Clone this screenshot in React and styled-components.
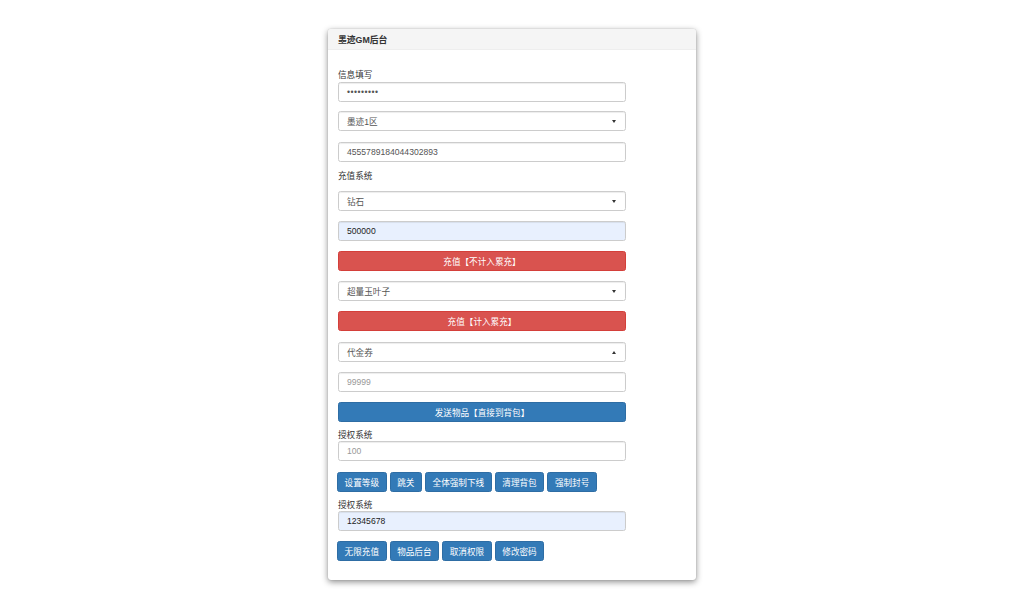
import styled, { createGlobalStyle } from 'styled-components'

const GlobalStyle = createGlobalStyle`
  html, body {
    margin: 0;
    padding: 0;
    background: #fff;
  }
  body {
    font-family: "Liberation Sans", "Noto Sans CJK SC", sans-serif;
    font-size: 8.6px;
    color: #333;
  }
  * { box-sizing: border-box; }
`

const Page = styled.div`
  display: flex;
  justify-content: center;
  padding-top: 29px;
  min-height: 601px;
`

const Panel = styled.div`
  width: 368px;
  background: #fff;
  border-radius: 3px;
  box-shadow: 0 2px 6px rgba(0, 0, 0, 0.45), 0 0 1px rgba(0, 0, 0, 0.3);
  align-self: flex-start;
`

const PanelHead = styled.div`
  height: 21px;
  display: flex;
  align-items: center;
  padding: 0 10px;
  background: #f5f5f5;
  border-bottom: 1px solid #eee;
  border-radius: 3px 3px 0 0;
  font-weight: bold;
  font-size: 8.8px;
  color: #333;
`

const PanelBody = styled.div`
  width: 308px;
  padding: 19px 10px 19px 10px;
  display: flex;
  flex-direction: column;
`

const Label = styled.div`
  height: ${p => p.$h || 12}px;
  line-height: ${p => p.$h || 12}px;
  color: #333;
  margin-bottom: ${p => p.$mb || 0}px;
`

const Field = styled.div`
  position: relative;
  height: 20px;
  flex-shrink: 0;
  display: flex;
  align-items: center;
  padding: 0 8px;
  border: 1px solid #ccc;
  border-radius: 2.5px;
  background: ${p => (p.$filled ? '#e8f0fe' : '#fff')};
  color: ${p => (p.$hint ? '#999' : p.$filled ? '#222' : '#555')};
  box-shadow: inset 0 1px 1px rgba(0, 0, 0, 0.075);
  margin-bottom: ${p => p.$mb ?? 10}px;
  letter-spacing: ${p => (p.$dots ? '0.5px' : 0)};
`

const Caret = styled.span`
  position: absolute;
  right: 9px;
  top: 8px;
  width: 0;
  height: 0;
  border-left: 2.5px solid transparent;
  border-right: 2.5px solid transparent;
  ${p =>
    p.$up
      ? 'border-bottom: 3px solid #333;'
      : 'border-top: 3px solid #333;'}
`

const WideButton = styled.div`
  height: 20px;
  flex-shrink: 0;
  display: flex;
  align-items: center;
  justify-content: center;
  border-radius: 2.5px;
  color: #fff;
  background: ${p => (p.$danger ? '#d9534f' : '#337ab7')};
  border: 1px solid ${p => (p.$danger ? '#d43f3a' : '#2e6da4')};
  margin-bottom: ${p => p.$mb ?? 10}px;
`

const ButtonRow = styled.div`
  display: flex;
  gap: 3px;
  margin-left: -1px;
  margin-bottom: ${p => p.$mb || 0}px;
`

const SmallButton = styled.div`
  height: 20px;
  display: flex;
  align-items: center;
  padding: 0 6.6px;
  border-radius: 2.5px;
  color: #fff;
  background: #337ab7;
  border: 1px solid #2e6da4;
  white-space: nowrap;
`

function Select({ children, up, mb }) {
  return (
    <Field $mb={mb}>
      {children}
      <Caret $up={up} />
    </Field>
  )
}

export default function App() {
  return (
    <>
      <GlobalStyle />
      <Page>
        <Panel>
          <PanelHead>墨迹GM后台</PanelHead>
          <PanelBody>
            <Label $mb={1}>信息填写</Label>
            <Field $dots $mb={9}>•••••••••</Field>
            <Select mb={11}>墨迹1区</Select>
            <Field $mb={8}>4555789184044302893</Field>

            <Label $mb={9}>充值系统</Label>
            <Select>钻石</Select>
            <Field $filled>500000</Field>
            <WideButton $danger>充值【不计入累充】</WideButton>
            <Select>超量玉叶子</Select>
            <WideButton $danger $mb={11}>充值【计入累充】</WideButton>
            <Select up>代金券</Select>
            <Field $hint>99999</Field>
            <WideButton $mb={8}>发送物品【直接到背包】</WideButton>

            <Label $h={11}>授权系统</Label>
            <Field $hint $mb={11}>100</Field>
            <ButtonRow $mb={8}>
              <SmallButton>设置等级</SmallButton>
              <SmallButton>跳关</SmallButton>
              <SmallButton>全体强制下线</SmallButton>
              <SmallButton>清理背包</SmallButton>
              <SmallButton>强制封号</SmallButton>
            </ButtonRow>

            <Label $h={11}>授权系统</Label>
            <Field $filled>12345678</Field>
            <ButtonRow>
              <SmallButton>无限充值</SmallButton>
              <SmallButton>物品后台</SmallButton>
              <SmallButton>取消权限</SmallButton>
              <SmallButton>修改密码</SmallButton>
            </ButtonRow>
          </PanelBody>
        </Panel>
      </Page>
    </>
  )
}
